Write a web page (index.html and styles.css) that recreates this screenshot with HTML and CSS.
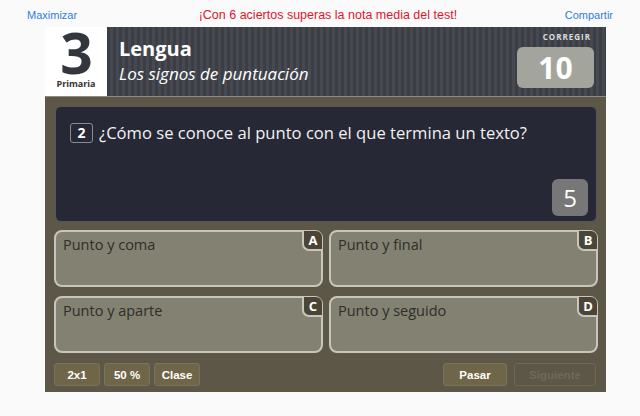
FILE: index.html
```html
<!DOCTYPE html>
<html lang="es">
<head>
<meta charset="utf-8">
<link rel="stylesheet" href="styles.css">
</head>
<body>
<div class="topbar">
  <a class="link">Maximizar</a>
  <span class="msg">¡Con 6 aciertos superas la nota media del test!</span>
  <a class="link">Compartir</a>
</div>
<div class="quiz">
  <div class="header">
    <div class="grade">
      <div class="grade-num">3</div>
      <div class="grade-label">Primaria</div>
    </div>
    <div class="title-area">
      <div class="titles">
        <div class="subject">Lengua</div>
        <div class="topic">Los signos de puntuación</div>
      </div>
      <div class="score">
        <div class="score-label">CORREGIR</div>
        <div class="score-box">10</div>
      </div>
    </div>
  </div>
  <div class="body">
    <div class="question">
      <div class="q-line"><span class="q-num">2</span><span class="q-text">¿Cómo se conoce al punto con el que termina un texto?</span></div>
      <div class="q-count">5</div>
    </div>
    <div class="answers">
      <div class="answer"><span class="a-text">Punto y coma</span><span class="a-letter">A</span></div>
      <div class="answer"><span class="a-text">Punto y final</span><span class="a-letter">B</span></div>
      <div class="answer"><span class="a-text">Punto y aparte</span><span class="a-letter">C</span></div>
      <div class="answer"><span class="a-text">Punto y seguido</span><span class="a-letter">D</span></div>
    </div>
    <div class="controls">
      <div class="group">
        <span class="btn">2x1</span>
        <span class="btn">50 %</span>
        <span class="btn">Clase</span>
      </div>
      <div class="group">
        <span class="btn wide">Pasar</span>
        <span class="btn wide disabled">Siguiente</span>
      </div>
    </div>
  </div>
</div>
</body>
</html>
```
FILE: styles.css
```css
* { box-sizing: border-box; }
body {
  margin: 0;
  background: #fafafa;
  font-family: "Open Sans", "Noto Sans", sans-serif;
}
.topbar {
  height: 27px;
  display: flex;
  justify-content: space-between;
  align-items: center;
  padding: 2px 27px 0 27px;
  font-family: "Liberation Sans", Arial, sans-serif;
  font-size: 11px;
}
.link { color: #2f7de1; }
.msg { color: #e3132b; margin-left: 14px; font-size: 12.5px; }
.quiz {
  margin-left: 45px;
  width: 561px;
}
.header {
  display: flex;
  height: 70px;
  border-bottom: 1px solid #8c8b82;
}
.grade {
  width: 62px;
  background: #fff;
  display: flex;
  flex-direction: column;
  align-items: center;
}
.grade-num {
  font-size: 57px;
  font-weight: 700;
  color: #33373d;
  line-height: 50px;
  margin-top: 0px;
  letter-spacing: -1px;
}
.grade-label {
  font-size: 9px;
  font-weight: 700;
  color: #333;
  margin-top: 0px;
}
.title-area {
  flex: 1;
  display: flex;
  justify-content: space-between;
  background: repeating-linear-gradient(90deg, #3b3f45 0px, #3b3f45 3px, #464a50 3px, #464a50 6px);
  padding: 0 12px 0 12px;
}
.titles { color: #fff; padding-top: 8px; }
.subject {
  font-size: 20px;
  font-weight: 700;
  line-height: 28px;
}
.topic {
  font-size: 17px;
  font-style: italic;
  line-height: 24px;
  margin-top: -1px;
}
.score {
  display: flex;
  flex-direction: column;
  align-items: flex-end;
  padding-top: 5px;
}
.score-label {
  font-size: 8px;
  font-weight: 700;
  color: #dcdcdc;
  letter-spacing: 1px;
  margin-right: 3px;
  line-height: 10px;
}
.score-box {
  margin-top: 5px;
  width: 77px;
  height: 41px;
  background: #a3a59d;
  border-radius: 6px;
  color: #fff;
  font-size: 30px;
  font-weight: 700;
  text-align: center;
  line-height: 41px;
}
.body {
  background: #5c5746;
  padding: 9px 8px 6px 9px;
}
.question {
  margin: 0 1px;
  height: 116px;
  background: #262835;
  border: 1px solid #55575c;
  border-radius: 6px;
  padding: 14px 8px 5px 14px;
  display: flex;
  flex-direction: column;
  justify-content: space-between;
}
.q-line { display: flex; align-items: center; }
.q-num {
  width: 23px;
  height: 20px;
  border: 1px solid #8a8b90;
  border-radius: 3px;
  color: #fff;
  font-size: 14px;
  font-weight: 700;
  display: flex;
  align-items: center;
  justify-content: center;
  margin-right: 6px;
}
.q-text {
  color: #f2f2f2;
  font-size: 16.6px;
}
.q-count {
  align-self: flex-end;
  width: 36px;
  height: 37px;
  background: #777777;
  border-radius: 6px;
  color: #fff;
  font-size: 24px;
  text-align: center;
  line-height: 37px;
}
.answers {
  margin-top: 8px;
  display: grid;
  grid-template-columns: 1fr 1fr;
  column-gap: 6px;
  row-gap: 9px;
}
.answer {
  position: relative;
  height: 57px;
  background: #838171;
  border: 2px solid #c8c6bc;
  border-radius: 8px;
  padding: 1px 7px;
}
.a-text {
  font-size: 14.5px;
  color: #2e2e2b;
}
.a-letter {
  position: absolute;
  top: -1px;
  right: -1px;
  width: 20px;
  height: 20px;
  background: #4a4537;
  border-left: 2px solid #c8c6bc;
  border-bottom: 2px solid #c8c6bc;
  border-bottom-left-radius: 7px;
  border-top-right-radius: 6px;
  color: #fff;
  font-size: 13px;
  font-weight: 700;
  display: flex;
  align-items: center;
  justify-content: center;
  line-height: 1;
}
.controls {
  margin-top: 10px;
  display: flex;
  justify-content: space-between;
  padding-left: 0;
  padding-right: 2px;
}
.group { display: flex; gap: 4px; }
.group + .group { gap: 7px; }
.btn {
  width: 46px;
  height: 23px;
  background: #6f6549;
  border: 1px solid #7b7359;
  border-radius: 3px;
  color: #fff;
  font-family: "Liberation Sans", Arial, sans-serif;
  font-size: 11.5px;
  font-weight: 700;
  display: flex;
  align-items: center;
  justify-content: center;
}
.btn.wide { width: 64px; }
.btn.disabled {
  width: 82px;
  background: transparent;
  border-color: #6e6853;
  color: #6f6a58;
}
```
